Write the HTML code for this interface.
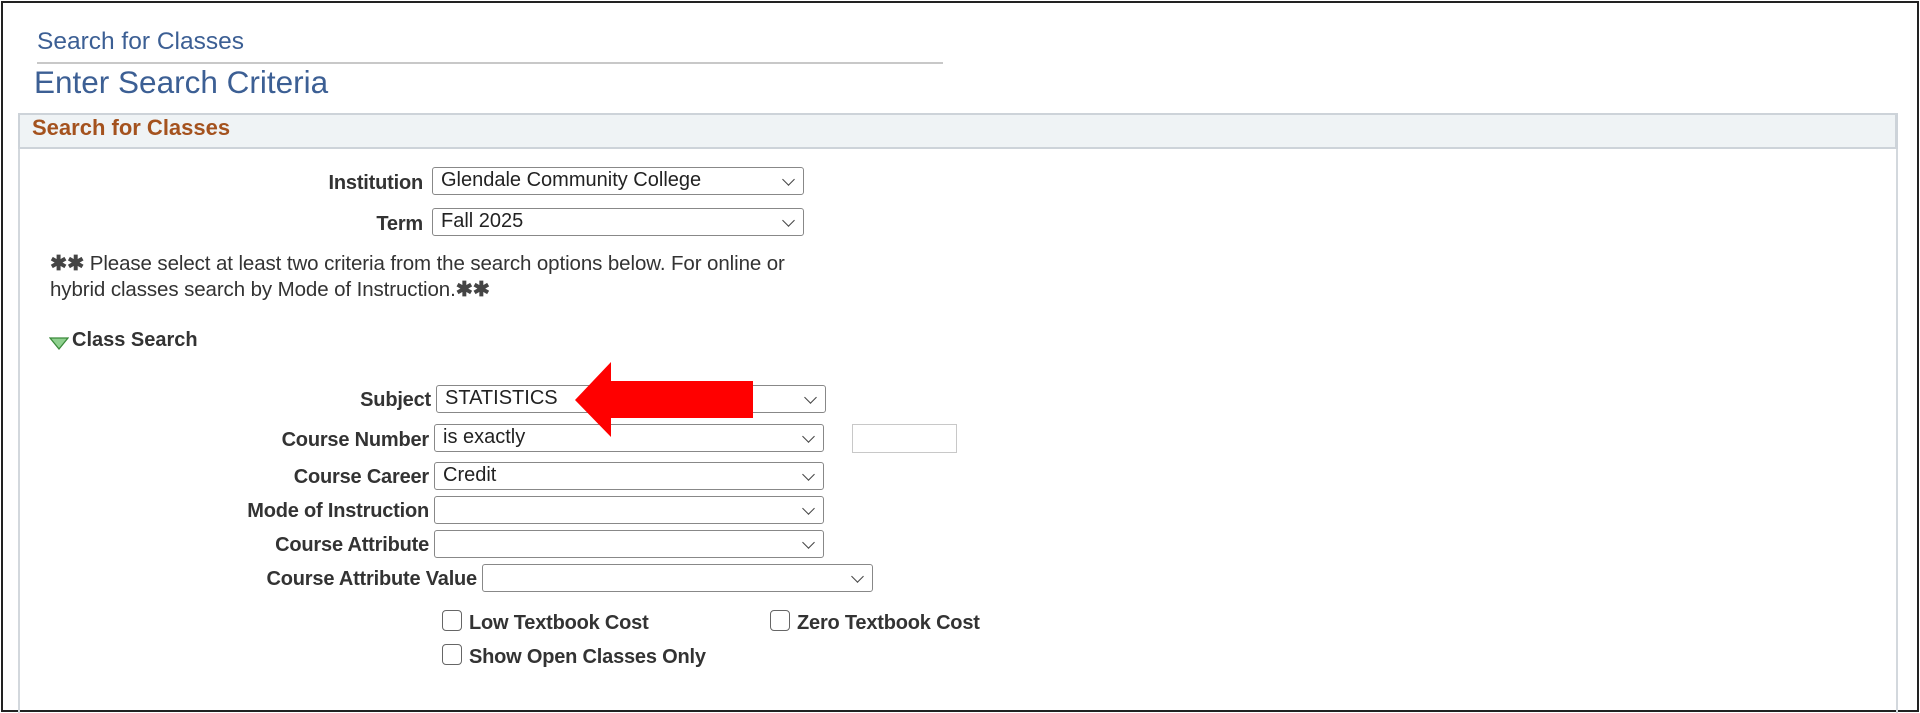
<!DOCTYPE html>
<html><head><meta charset="utf-8"><style>
*{box-sizing:border-box;margin:0;padding:0}
body{width:1920px;height:713px;background:#fff;font-family:"Liberation Sans",Arial,sans-serif;position:relative;overflow:hidden}
.a{position:absolute}
.frame{left:1px;top:1px;width:1918px;height:711px;border:2px solid #222}
.lbl{position:absolute;font-weight:bold;font-size:20px;color:#333;text-align:right;white-space:nowrap;letter-spacing:-0.2px}
.sel{position:absolute;border:1px solid #888;border-radius:3px;background:#fff;font-size:20px;color:#222;padding:1px 0 0 8px;height:28px;white-space:nowrap}
.sel::after{content:"";position:absolute;right:10px;top:7px;width:8px;height:8px;border-right:1.3px solid #444;border-bottom:1.3px solid #444;transform:rotate(45deg)}
.cb{position:absolute;width:20px;height:21px;border:1.5px solid #666;border-radius:4px;background:#fff}
.cl{position:absolute;font-weight:bold;font-size:20px;color:#333;white-space:nowrap;letter-spacing:-0.2px}
</style></head><body>
<div class="a frame"></div>
<div class="a" style="left:37px;top:28px;font-size:24.5px;color:#3c5f94">Search for Classes</div>
<div class="a" style="left:37px;top:62px;width:906px;height:2px;background:#c8c8c8"></div>
<div class="a" style="left:34px;top:64px;font-size:31.5px;color:#3c5f94">Enter Search Criteria</div>
<div class="a" style="left:18px;top:113px;width:1880px;height:600px;border-left:2px solid #d3d8dd;border-right:2px solid #d3d8dd"></div>
<div class="a" style="left:18px;top:113px;width:1880px;height:36px;background:#eff3f5;border:2px solid #cdd3d9;border-right-width:3px"></div>
<div class="a" style="left:32px;top:115px;font-size:22px;font-weight:bold;color:#a4521e">Search for Classes</div>

<div class="lbl" style="right:1497px;top:172px">Institution</div>
<div class="sel" style="left:432px;top:167px;width:372px">Glendale Community College</div>
<div class="lbl" style="right:1497px;top:213px">Term</div>
<div class="sel" style="left:432px;top:208px;width:372px">Fall 2025</div>

<div class="a" style="left:50px;top:251px;font-size:20.5px;color:#333;line-height:26px;width:900px;letter-spacing:-0.1px"><b style="color:#444">✱✱</b> Please select at least two criteria from the search options below. For online or<br>hybrid classes search by Mode of Instruction.<b style="color:#444">✱✱</b></div>

<svg class="a" style="left:49px;top:337px" width="20" height="14"><path d="M1 1 L19 1 L10 12 Z" fill="#8fd08f" stroke="#3a8a3a" stroke-width="1.3"/></svg>
<div class="a" style="left:72px;top:329px;font-size:20px;font-weight:bold;color:#333">Class Search</div>

<div class="lbl" style="right:1489px;top:389px">Subject</div>
<div class="sel" style="left:436px;top:385px;width:390px">STATISTICS</div>
<div class="lbl" style="right:1491px;top:429px">Course Number</div>
<div class="sel" style="left:434px;top:424px;width:390px">is exactly</div>
<div class="a" style="left:852px;top:424px;width:105px;height:29px;border:1.5px solid #c8c8c8"></div>
<div class="lbl" style="right:1491px;top:466px">Course Career</div>
<div class="sel" style="left:434px;top:462px;width:390px">Credit</div>
<div class="lbl" style="right:1491px;top:500px">Mode of Instruction</div>
<div class="sel" style="left:434px;top:496px;width:390px"></div>
<div class="lbl" style="right:1491px;top:534px">Course Attribute</div>
<div class="sel" style="left:434px;top:530px;width:390px"></div>
<div class="lbl" style="right:1443px;top:568px">Course Attribute Value</div>
<div class="sel" style="left:482px;top:564px;width:391px"></div>

<div class="cb" style="left:442px;top:610px"></div>
<div class="cl" style="left:469px;top:612px">Low Textbook Cost</div>
<div class="cb" style="left:770px;top:610px"></div>
<div class="cl" style="left:797px;top:612px">Zero Textbook Cost</div>
<div class="cb" style="left:442px;top:644px"></div>
<div class="cl" style="left:469px;top:646px">Show Open Classes Only</div>

<svg class="a" style="left:570px;top:358px" width="190" height="84"><path d="M5 42 L41 4 L41 23 L183 23 L183 60 L41 60 L41 79 Z" fill="#ff0000"/></svg>
</body></html>
